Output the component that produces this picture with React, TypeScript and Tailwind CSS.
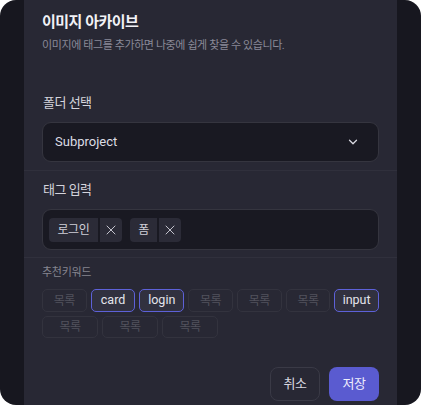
import { ChevronDown, X } from "lucide-react";

const keywordsTop = [
    { label: "목록", active: false },
    { label: "card", active: true },
    { label: "login", active: true },
    { label: "목록", active: false },
    { label: "목록", active: false },
    { label: "목록", active: false },
    { label: "input", active: true },
];

const keywordsBottom = ["목록", "목록", "목록"];

const tags = [
    { label: "로그인", w: "w-[49px]" },
    { label: "폼", w: "w-[27px]" },
];

const Keyword = ({ label, active }: { label: string; active: boolean }) => (
    <span
        className={
            active
                ? "flex h-[23px] items-center justify-center rounded-[5px] border border-[#5d61d8] bg-[#31313f] text-[12.5px] text-[#e4e4ec]"
                : "flex h-[23px] items-center justify-center rounded-[5px] border border-[#33333e] text-[12px] tracking-[-0.5px] text-[#52525d]"
        }
    >
        {label}
    </span>
);

export default function App() {
    return (
        <div className="flex h-[405px] w-[421px] overflow-hidden rounded-[16px] bg-[#17171f] font-['Roboto','Noto_Sans_CJK_KR',sans-serif]">
            <div className="mx-[24px] flex flex-1 flex-col bg-[#282834]">
                {/* header */}
                <div className="px-[18px] pt-[10px]">
                    <h1 className="text-[15px] font-bold leading-[24px] tracking-[-0.5px] text-[#f2f2f6]">
                        이미지 아카이브
                    </h1>
                    <p className="mt-[4px] text-[11px] leading-[16px] tracking-[-0.4px] text-[#8a8a98]">
                        이미지에 태그를 추가하면 나중에 쉽게 찾을 수 있습니다.
                    </p>
                </div>

                {/* folder */}
                <div className="border-b border-[#30303c] px-[18px] pb-[8px] pt-[39px]">
                    <label className="block pl-[1px] text-[13px] leading-[20px] tracking-[-0.5px] text-[#d4d4dc]">
                        폴더 선택
                    </label>
                    <div className="mt-[9px] flex h-[40px] items-center justify-between rounded-[9px] border border-[#35353f] bg-[#191922] pl-[12px] pr-[18px]">
                        <span className="text-[13px] text-[#dcdce4]">Subproject</span>
                        <ChevronDown size={14} strokeWidth={2.2} className="text-[#d8d8e0]" />
                    </div>
                </div>

                {/* tags */}
                <div className="border-b border-[#30303c] px-[18px] pb-[7px] pt-[9px]">
                    <label className="block pl-[1px] text-[13px] leading-[20px] tracking-[-0.5px] text-[#d4d4dc]">
                        태그 입력
                    </label>
                    <div className="mt-[9px] flex h-[41px] items-center gap-[8px] rounded-[9px] border border-[#35353f] bg-[#191922] pl-[6px]">
                        {tags.map((t, i) => (
                            <div key={i} className="flex h-[24px] gap-[2px]">
                                <span
                                    className={`flex ${t.w} items-center justify-center rounded-l-[4px] bg-[#2b2b37] text-[12px] tracking-[-0.3px] text-[#cfcfd8]`}
                                >
                                    {t.label}
                                </span>
                                <span className="flex w-[22px] items-center justify-center rounded-r-[4px] bg-[#2b2b37] text-[#cfcfd8]">
                                    <X size={16} strokeWidth={1.4} />
                                </span>
                            </div>
                        ))}
                    </div>
                </div>

                {/* suggested keywords */}
                <div className="px-[18px] pt-[7px]">
                    <p className="text-[11px] leading-[16px] tracking-[-0.3px] text-[#85858f]">
                        추천키워드
                    </p>
                    <div className="mt-[8px] grid grid-cols-7 gap-[4px]">
                        {keywordsTop.map((k, i) => (
                            <Keyword key={i} label={k.label} active={k.active} />
                        ))}
                    </div>
                    <div className="mt-[4px] flex gap-[4px]">
                        {keywordsBottom.map((k, i) => (
                            <span
                                key={i}
                                className="flex h-[22px] w-[56px] items-center justify-center rounded-[5px] border border-[#33333e] text-[12px] tracking-[-0.5px] text-[#52525d]"
                            >
                                {k}
                            </span>
                        ))}
                    </div>
                </div>

                {/* actions */}
                <div className="mt-[29px] flex justify-end gap-[9px] px-[18px]">
                    <button className="h-[34px] w-[50px] rounded-[8px] border border-[#3a3a46] text-[13px] tracking-[-0.5px] text-[#d8d8e0]">
                        취소
                    </button>
                    <button className="h-[34px] w-[50px] rounded-[8px] bg-[#5a5bd0] text-[13px] tracking-[-0.5px] text-[#eeeefc]">
                        저장
                    </button>
                </div>
            </div>
        </div>
    );
}
